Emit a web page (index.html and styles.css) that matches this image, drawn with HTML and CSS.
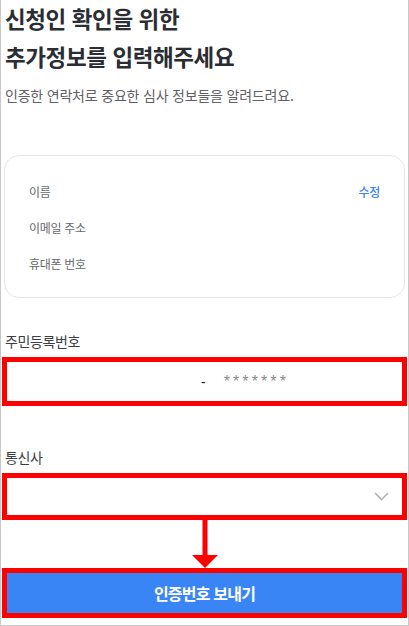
FILE: index.html
```html
<!DOCTYPE html>
<html lang="ko">
<head>
<meta charset="utf-8">
<title>추가정보 입력</title>
<link rel="stylesheet" href="styles.css">
</head>
<body>
<div class="page">
  <h1 class="title">신청인 확인을 위한<br>추가정보를 입력해주세요</h1>
  <p class="subtitle">인증한 연락처로 중요한 심사 정보들을 알려드려요.</p>

  <div class="card">
    <div class="card-row">
      <span>이름</span>
      <a class="edit">수정</a>
    </div>
    <div class="card-row"><span>이메일 주소</span></div>
    <div class="card-row"><span>휴대폰 번호</span></div>
  </div>

  <div class="label first-label">주민등록번호</div>
  <div class="frame">
    <div class="rrn">
      <span class="dash">-</span>
      <span class="mask">*******</span>
    </div>
  </div>

  <div class="label second-label">통신사</div>
  <div class="frame select-frame">
    <div class="select">
      <svg class="chevron" width="15" height="9" viewBox="0 0 15 9"><path d="M1 1 L7.5 7.5 L14 1" fill="none" stroke="#b3b3b3" stroke-width="1.6"/></svg>
    </div>
  </div>

  <div class="arrow">
    <svg width="28" height="48" viewBox="0 0 28 48"><rect x="11.5" y="0" width="5" height="36" fill="#ff0000"/><polygon points="1,35 27,35 14,48" fill="#ff0000"/></svg>
  </div>

  <div class="frame button-frame">
    <button class="submit">인증번호 보내기</button>
  </div>
</div>
</body>
</html>
```

FILE: styles.css
```css
* { box-sizing: border-box; }
html, body { margin: 0; padding: 0; background: #fff; }
body { font-family: "Noto Sans CJK KR", "Noto Sans", sans-serif; }

.page {
  width: 409px;
  height: 626px;
  border: 1px solid #c8c8c8;
  border-top: none;
  padding: 0 1px;
  display: flex;
  flex-direction: column;
  overflow: hidden;
}

.title {
  margin: -1px 0 0;
  padding-left: 3px;
  font-size: 22.5px;
  line-height: 38px;
  font-weight: 700;
  letter-spacing: -0.4px;
  color: #2a2d33;
}

.subtitle {
  margin: 10px 0 0;
  padding-left: 3px;
  font-size: 14px;
  line-height: 20px;
  letter-spacing: -0.2px;
  color: #5f6166;
}

.card {
  margin: 50px 2px 0;
  height: 143px;
  border: 1px solid #e6e6e6;
  border-radius: 15px;
  padding: 17px 24px 0;
}

.card-row {
  height: 36px;
  display: flex;
  align-items: center;
  justify-content: space-between;
  font-size: 12px;
  letter-spacing: -0.3px;
  color: #66686c;
}

.edit {
  color: #3b82f0;
  font-weight: 500;
}

.label {
  padding-left: 3px;
  font-size: 14px;
  line-height: 20px;
  letter-spacing: -0.4px;
  color: #3c3e42;
}
.first-label { margin-top: 33px; }
.second-label { margin-top: 41px; }

.frame {
  margin-top: 6px;
  border: 5px solid #ff0000;
  background: #fff;
}

.rrn {
  height: 39px;
  display: flex;
  align-items: center;
  padding-left: 194px;
  font-family: "Liberation Sans", sans-serif;
}
.dash { font-size: 14px; color: #222; }
.mask { margin-left: 18px; font-size: 16px; letter-spacing: 3.1px; color: #8a8a8a; }

.select {
  height: 37px;
  display: flex;
  align-items: center;
  justify-content: flex-end;
  padding-right: 13px;
}

.arrow {
  height: 48px;
  display: flex;
  justify-content: center;
}
.arrow svg { display: block; margin-left: 1px; }

.button-frame { margin-top: 0; }

.submit {
  display: block;
  width: 100%;
  height: 40px;
  border: none;
  margin: 0;
  background: #3a85f5;
  color: #fff;
  font-family: "Noto Sans CJK KR", sans-serif;
  font-size: 16px;
  font-weight: 700;
  letter-spacing: -0.8px;
}
```
